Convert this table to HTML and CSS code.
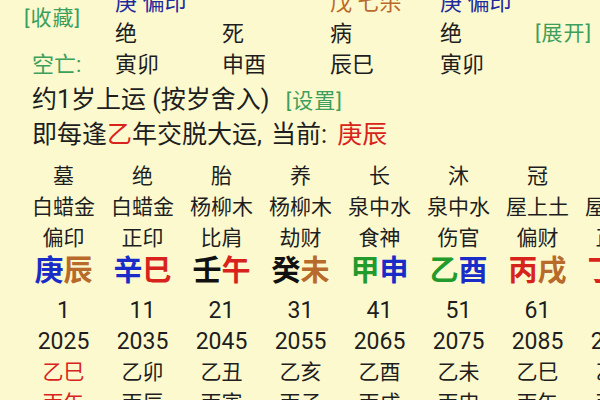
FILE: index.html
```html
<!DOCTYPE html>
<html lang="zh-CN">
<head>
<meta charset="utf-8">
<title>大运</title>
<link rel="stylesheet" href="styles.css">
</head>
<body>
<div class="page">
  <div class="top">
    <div class="fav">[收藏]</div>
    <div class="cell r1 c2 metal">庚 偏印</div>
    <div class="cell r1 c4 earth">戊 七杀</div>
    <div class="cell r1 c5 metal">庚 偏印</div>
    <div class="cell r2 c2">绝</div>
    <div class="cell r2 c3">死</div>
    <div class="cell r2 c4">病</div>
    <div class="cell r2 c5">绝</div>
    <div class="cell r2 c6 link">[展开]</div>
    <div class="cell r3 c1 label">空亡:</div>
    <div class="cell r3 c2">寅卯</div>
    <div class="cell r3 c3">申酉</div>
    <div class="cell r3 c4">辰巳</div>
    <div class="cell r3 c5">寅卯</div>
  </div>
  <div class="line first">约1岁上运 (按岁舍入) <span class="set">[设置]</span></div>
  <div class="line">即每逢<span class="fire">乙</span>年交脱大运<span class="comma">,</span>当前<span class="colon">:</span> <span class="fire">庚辰</span></div>
  <div class="dayun">
    <div class="row"><span>墓</span><span>绝</span><span>胎</span><span>养</span><span>长</span><span>沐</span><span>冠</span><span>临</span></div>
    <div class="row"><span>白蜡金</span><span>白蜡金</span><span>杨柳木</span><span>杨柳木</span><span>泉中水</span><span>泉中水</span><span>屋上土</span><span>屋上土</span></div>
    <div class="row"><span>偏印</span><span>正印</span><span>比肩</span><span>劫财</span><span>食神</span><span>伤官</span><span>偏财</span><span>正财</span></div>
    <div class="row gz">
      <span><b class="metal">庚</b><b class="earth">辰</b></span>
      <span><b class="metal">辛</b><b class="fire">巳</b></span>
      <span><b class="water">壬</b><b class="fire">午</b></span>
      <span><b class="water">癸</b><b class="earth">未</b></span>
      <span><b class="wood">甲</b><b class="metal">申</b></span>
      <span><b class="wood">乙</b><b class="metal">酉</b></span>
      <span><b class="fire">丙</b><b class="earth">戌</b></span>
      <span><b class="fire">丁</b><b class="water">亥</b></span>
    </div>
    <div class="row num age"><span>1</span><span>11</span><span>21</span><span>31</span><span>41</span><span>51</span><span>61</span><span>71</span></div>
    <div class="row num"><span>2025</span><span>2035</span><span>2045</span><span>2055</span><span>2065</span><span>2075</span><span>2085</span><span>2095</span></div>
    <div class="row"><span class="fire">乙巳</span><span>乙卯</span><span>乙丑</span><span>乙亥</span><span>乙酉</span><span>乙未</span><span>乙巳</span><span>乙卯</span></div>
    <div class="row"><span class="fire">丙午</span><span>丙辰</span><span>丙寅</span><span>丙子</span><span>丙戌</span><span>丙申</span><span>丙午</span><span>丙辰</span></div>
  </div>
</div>
</body>
</html>
```

FILE: styles.css
```css
html, body {
  margin: 0;
  padding: 0;
}
body {
  width: 600px;
  height: 400px;
  overflow: hidden;
  background: #fcf9cf;
  color: #1e1e1e;
  font-family: Roboto, "Noto Sans CJK SC", sans-serif;
}
.page {
  padding-left: 32px;
}
.top {
  display: grid;
  grid-template-columns: 83px 107px 108px 110px 95px auto;
  grid-template-rows: 31px 31px 31px;
  margin-top: -13px;
  font-size: 22px;
  line-height: 31px;
  white-space: nowrap;
}
.fav {
  grid-column: 1;
  grid-row: 1 / 3;
  align-self: center;
  margin-left: -8px;
  font-size: 21px;
  letter-spacing: 1px;
  color: #3d9f5c;
}
.r1 { grid-row: 1; }
.r2 { grid-row: 2; }
.r3 { grid-row: 3; }
.c1 { grid-column: 1; }
.c2 { grid-column: 2; }
.c3 { grid-column: 3; }
.c4 { grid-column: 4; }
.c5 { grid-column: 5; }
.c6 { grid-column: 6; }
.link {
  font-size: 21px;
  letter-spacing: 1px;
  color: #3d9f5c;
}
.label {
  color: #3d9f5c;
}
.line {
  font-size: 25px;
  line-height: 33px;
  white-space: nowrap;
}
.line.first {
  margin-top: 3px;
}
.comma {
  margin-right: 9px;
}
.colon {
  margin-right: 4px;
}
.set {
  font-size: 21px;
  letter-spacing: 1px;
  color: #3d9f5c;
  margin-left: 10px;
}
.dayun {
  margin-left: -8px;
  margin-top: 10px;
}
.row {
  display: flex;
  font-size: 21px;
  line-height: 31px;
  white-space: nowrap;
}
.row span {
  flex: 0 0 79px;
  text-align: center;
}
.row.num {
  font-size: 23px;
}
.row.gz {
  font-size: 29px;
  line-height: 35px;
}
.row.gz b {
  font-weight: 700;
}
.row.age {
  margin-top: 6px;
}
.metal { color: #1a2cc8; }
.earth { color: #b86a2a; }
.fire { color: #d8231d; }
.water { color: #111; }
.wood { color: #239a2c; }
.top .metal { color: #1f2a9e; }
```
